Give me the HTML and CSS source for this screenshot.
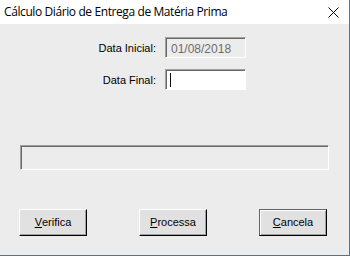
FILE: index.html
```html
<!DOCTYPE html>
<html>
<head>
<meta charset="utf-8">
<link rel="stylesheet" href="styles.css">
</head>
<body>
<div class="window">
  <div class="titlebar">
    <span class="title">Cálculo Diário de Entrega de Matéria Prima</span>
    <svg class="close" width="11" height="11" viewBox="0 0 11 11"><path d="M0.5 0.5 L10.5 10.5 M10.5 0.5 L0.5 10.5" stroke="#000" stroke-width="1" fill="none"/></svg>
  </div>
  <div class="content">
    <div class="form">
      <div class="row">
        <span class="label">Data Inicial:</span>
        <div class="field disabled">01/08/2018</div>
      </div>
      <div class="row">
        <span class="label">Data Final:</span>
        <div class="field"><span class="caret"></span></div>
      </div>
    </div>
    <div class="progress"></div>
    <div class="buttons">
      <div class="btn"><u>V</u>erifica</div>
      <div class="btn"><u>P</u>rocessa</div>
      <div class="btn default"><u>C</u>ancela</div>
    </div>
  </div>
</div>
</body>
</html>
```

FILE: styles.css
```css
html, body {
  margin: 0;
  padding: 0;
}
body {
  width: 350px;
  height: 256px;
  overflow: hidden;
  font-family: "Liberation Sans", Arial, sans-serif;
}
.window {
  box-sizing: border-box;
  width: 350px;
  height: 256px;
  background: #ececec;
  border-right: 1px solid #1883d7;
  border-bottom: 1px solid #1883d7;
  display: flex;
  flex-direction: column;
}
.titlebar {
  height: 24px;
  background: #fff;
  display: flex;
  align-items: center;
  justify-content: space-between;
  padding: 0 10px 0 4px;
  flex: none;
}
.title {
  font-family: "Open Sans", "Noto Sans", sans-serif;
  font-size: 12px;
  letter-spacing: -0.4px;
  color: #000;
  margin-top: -1px;
}
.close {
  display: block;
}
.content {
  flex: 1;
  display: flex;
  flex-direction: column;
}
.form {
  padding-top: 13px;
  display: flex;
  flex-direction: column;
  gap: 11px;
}
.row {
  display: flex;
  align-items: center;
  gap: 9px;
}
.label {
  width: 156px;
  text-align: right;
  font-size: 11px;
  color: #000;
}
.field {
  box-sizing: border-box;
  width: 81px;
  height: 21px;
  border-style: solid;
  border-width: 1px;
  border-color: #a0a0a0 #fff #fff #a0a0a0;
  box-shadow: inset 1px 1px 0 #696969;
  background: #fff;
  font-size: 12px;
  padding: 2px 0 0 5px;
  display: flex;
  align-items: center;
}
.field.disabled {
  background: #ececec;
  color: #6d6d6d;
}
.caret {
  display: block;
  width: 1px;
  height: 14px;
  background: #000;
  margin-left: -1px;
  margin-top: -2px;
}
.progress {
  box-sizing: border-box;
  margin: 55px 20px 0 20px;
  height: 25px;
  border-style: solid;
  border-width: 1px;
  border-color: #a0a0a0 #fff #fff #a0a0a0;
  box-shadow: inset 1px 1px 0 #696969;
}
.buttons {
  display: flex;
  gap: 52px;
  padding-left: 19px;
  margin-top: 39px;
}
.btn {
  box-sizing: border-box;
  width: 68px;
  height: 27px;
  border-style: solid;
  border-width: 1px;
  border-color: #fff #000 #000 #fff;
  box-shadow: inset -1px -1px 0 #a0a0a0;
  background: #e1e1e1;
  font-size: 11px;
  color: #000;
  display: flex;
  align-items: center;
  justify-content: center;
  padding-bottom: 1px;
}
.btn.default {
  border-color: #646464 #000 #000 #646464;
  box-shadow: inset 1px 1px 0 #fff, inset -1px -1px 0 #a0a0a0;
}
u {
  text-decoration: underline;
  text-underline-offset: 1px;
}
```
